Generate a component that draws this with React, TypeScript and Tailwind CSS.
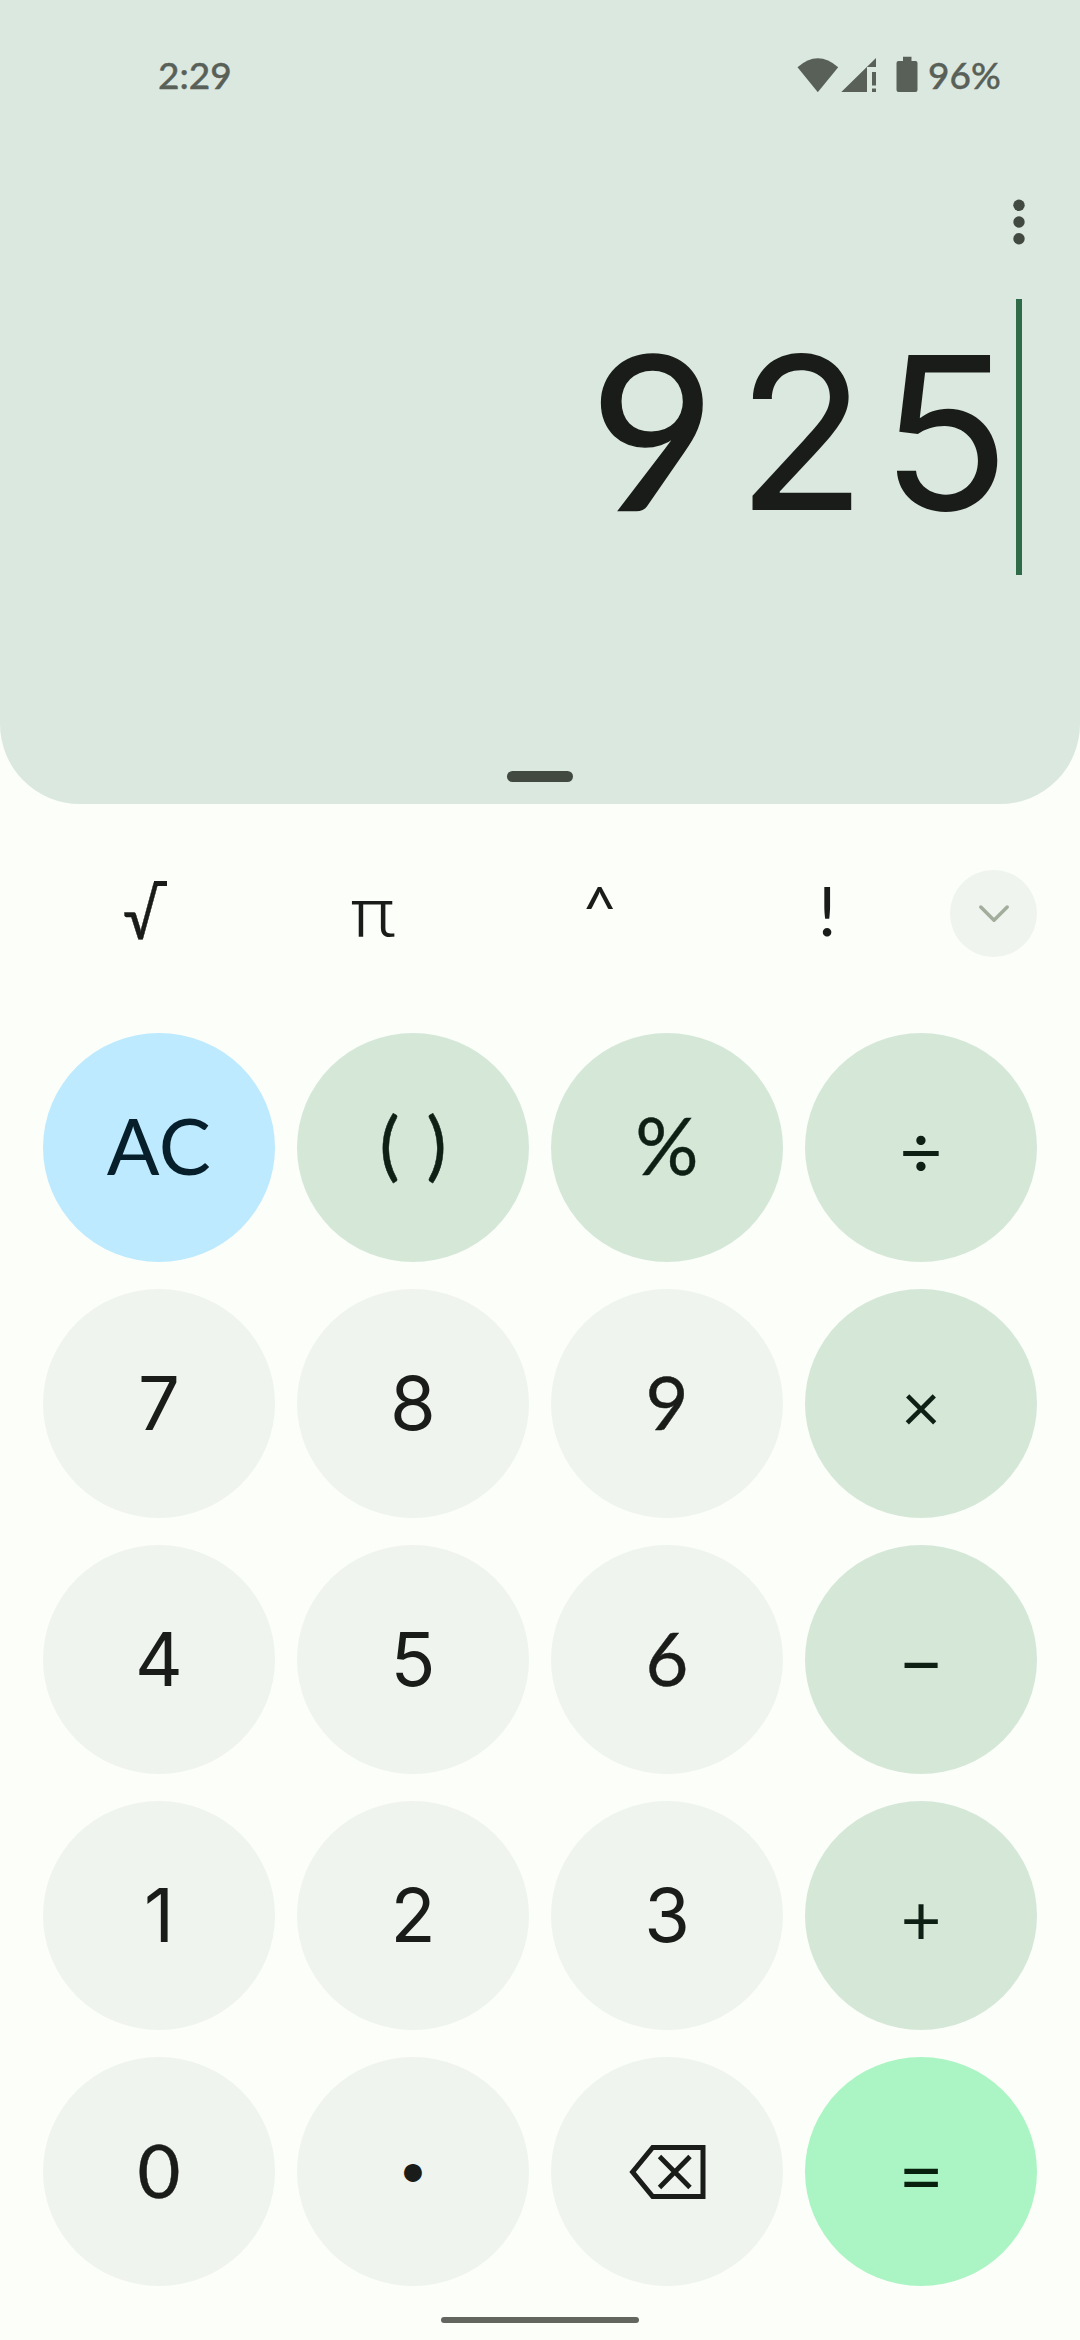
import React from "react";

type Key = { label: React.ReactNode; name: string; className: string };

function Backspace() {
  return (
    <svg viewBox="0 0 77 54" className="h-[54px] w-[77px]" fill="none" stroke="currentColor" strokeWidth="5">
      <path d="M23.7 2.5H74V51.5H23.7L3.6 27Z" strokeLinejoin="miter" />
      <path d="M30.5 11.5L61 42.5M61 11.5L30.5 42.5" strokeWidth="4.8" />
    </svg>
  );
}

const op = "bg-[#d5e8d8] text-[#0e1f14]";
const digit = "bg-[#eff4ee] text-[#191c18] text-[74px] pb-px font-['Inter',sans-serif]";
const round = "bg-[#eff4ee] text-[#191c18] text-[74px] pb-1 [-webkit-text-stroke:0.4px]";

const keys: Key[] = [
  { name: "clear", label: "AC", className: "bg-[#bdeaff] text-[#061f2a] text-[78px] pb-1.5 tracking-[0.5px]" },
  { name: "parentheses", label: "( )", className: `${op} text-[75px] pb-2 [word-spacing:8px] [-webkit-text-stroke:0.5px]` },
  { name: "percent", label: "%", className: `${op} text-[79px] pb-1.5 [-webkit-text-stroke:0.4px]` },
  { name: "divide", label: "÷", className: `${op} text-[74px] pt-1` },
  { name: "7", label: "7", className: digit },
  { name: "8", label: "8", className: digit },
  { name: "9", label: "9", className: round },
  { name: "multiply", label: "×", className: `${op} text-[68px] pt-1` },
  { name: "4", label: "4", className: digit },
  { name: "5", label: "5", className: digit },
  { name: "6", label: "6", className: round },
  { name: "subtract", label: "−", className: `${op} text-[77px] pt-1` },
  { name: "1", label: "1", className: digit },
  { name: "2", label: "2", className: digit },
  { name: "3", label: "3", className: digit },
  { name: "add", label: "+", className: `${op} text-[70px] pt-[5px]` },
  { name: "0", label: "0", className: round },
  { name: "point", label: "•", className: "bg-[#eff4ee] text-[#191c18] text-[48px] pb-[5px]" },
  { name: "backspace", label: <Backspace />, className: "bg-[#eff4ee] text-[#191c18]" },
  { name: "equals", label: "=", className: "bg-[#aaf5c3] text-[#08210f] text-[78px] pt-1" },
];

const functions = [
  { label: "π", className: "font-['Roboto',sans-serif] font-light text-[67px] pb-px scale-x-[1.14]" },
  { label: "^", className: "text-[60px] pb-[13px]" },
  { label: "!", className: "text-[68px] pb-2" },
];

function StatusBar() {
  return (
    <div className="flex h-[150px] items-start justify-between pt-[56px] pr-[78px] pl-[158px] text-[37px] leading-[38px] font-medium text-[#586058]">
      <span className="[-webkit-text-stroke:0.4px]">2:29</span>
      <div className="flex items-start">
        <svg viewBox="0 0 42 36" className="h-9 w-[42px]" fill="currentColor">
          <path d="M.5 11.2Q20.8-6.8 41.2 11.2L20.8 36.2Z" />
        </svg>
        <svg viewBox="0 0 36 36" className="ml-0.5 h-9 w-9" fill="currentColor">
          <path d="M0 36.3L35 2V11H26V36.3ZM31 16H35V29.5H31ZM31 32.5H35V36.3H31Z" />
        </svg>
        <svg viewBox="0 0 22 36" className="ml-[19px] h-9 w-[22px]" fill="currentColor">
          <path d="M7 .8H15.500V5H19.500Q21.500 5 21.500 7V34Q21.500 36 19.500 36H2.500Q.5 36 .5 34V7Q.5 5 2.500 5H7Z" />
        </svg>
        <span className="ml-2.5 w-[74px] whitespace-nowrap [-webkit-text-stroke:0.4px]">96%</span>
      </div>
    </div>
  );
}

export default function App() {
  return (
    <div className="flex h-[2340px] w-[1080px] flex-col overflow-hidden bg-[#fcfef9] font-['Lato',sans-serif] text-[#191c18]">
      <header className="flex h-[804px] flex-col rounded-b-[80px] bg-[#dbe8df]">
        <StatusBar />
        <div className="flex h-[149px] items-start justify-end pt-[49px] pr-[55px]">
          <svg viewBox="0 0 12 46" className="h-[46px] w-3" fill="#414941">
            <circle cx="6" cy="6.300" r="5.700" />
            <circle cx="6" cy="23" r="5.700" />
            <circle cx="6" cy="39.700" r="5.700" />
          </svg>
        </div>
        <div className="flex h-[276px] justify-end pr-[58px]">
          <span className="font-['Inter',sans-serif] text-[213px] leading-[267px] tracking-[14px]">
            <span className="font-['Lato',sans-serif] text-[216px] leading-[100px] tracking-[21px] [-webkit-text-stroke:1.5px]">9</span>
            25
          </span>
          <span className="-ml-2 h-[276px] w-1.5 bg-[#2f6a49]" />
        </div>
        <div className="mx-auto mt-[196px] h-[11px] w-[66px] rounded-full bg-[#414941]" />
      </header>

      <div className="mt-[66px] flex h-[87px] items-center justify-between pr-[43px] pl-[31px]">
        <div className="grid h-full w-[910px] grid-cols-4">
          <button className="relative flex items-center justify-center pr-2 text-[67px] leading-none">
            <span className="inline-block scale-x-[0.85] [-webkit-text-stroke:0.5px]">√</span>
            <span className="absolute top-[11px] left-[123px] h-[5px] w-[13px] bg-current" />
          </button>
          {functions.map((f) => (
            <button key={f.label} className={`flex items-center justify-center leading-none ${f.className}`}>
              {f.label}
            </button>
          ))}
        </div>
        <button className="flex size-[87px] items-center justify-center rounded-full bg-[#eff4ef]">
          <svg viewBox="0 0 32 20" className="h-5 w-8" fill="none" stroke="#a3ad9b" strokeWidth="3.500" strokeLinecap="round" strokeLinejoin="round">
            <path d="M2.800 3L16 16.200L29.200 3" />
          </svg>
        </button>
      </div>

      <main className="mt-[76px] grid grid-cols-[repeat(4,232px)] justify-center gap-x-[22px] gap-y-[27px]">
        {keys.map((k) => (
          <button
            key={k.name}
            aria-label={k.name}
            className={`flex h-[229px] w-[232px] items-center justify-center rounded-[50%] leading-none ${k.className}`}
          >
            {k.label}
          </button>
        ))}
      </main>

      <div className="mx-auto mt-[31px] h-1.5 w-[198px] rounded-full bg-[#63665f]" />
    </div>
  );
}
